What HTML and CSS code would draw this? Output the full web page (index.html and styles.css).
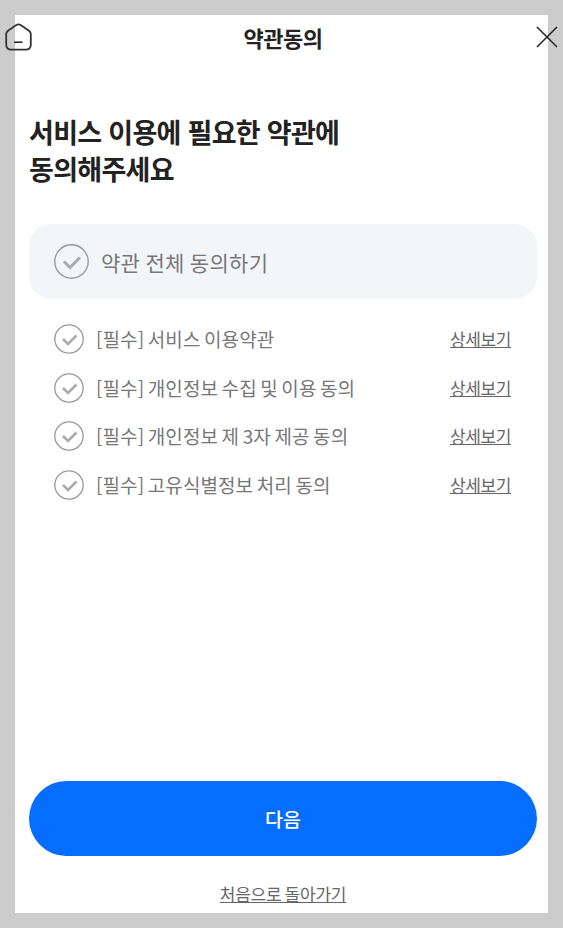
FILE: index.html
```html
<!DOCTYPE html>
<html lang="ko">
  <head>
    <meta charset="UTF-8">
    <title>약관동의</title>
    <link rel="stylesheet" href="styles.css">
  </head>
  <body>
    <div class="panel">
      <header class="top-bar">
        <svg class="home-icon" viewBox="0 0 27 28" width="27" height="28">
          <path d="M11 2.2 3 7.8C1.9 8.6 1.2 9.6 1.2 11V21.5C1.2 24.6 3.2 26.7 6.2 26.7H20.8C23.8 26.7 25.8 24.6 25.8 21.5V11C25.8 9.6 25.1 8.6 24 7.8L16 2.2C14.3 1.1 12.7 1.1 11 2.2Z" fill="none" stroke="#333" stroke-width="1.8"/>
          <path d="M9 19.2H17.5" fill="none" stroke="#333" stroke-width="1.7"/>
        </svg>
        <h1 class="top-title">약관동의</h1>
        <svg class="close-icon" viewBox="0 0 22 22" width="22" height="22">
          <path d="M1 1 21 21M21 1 1 21" fill="none" stroke="#222" stroke-width="1.5"/>
        </svg>
      </header>

      <h2 class="headline">서비스 이용에 필요한 약관에<br>동의해주세요</h2>

      <div class="agree-all">
        <svg class="check-big" viewBox="0 0 35 35" width="35" height="35">
          <circle cx="17.5" cy="17.5" r="16.7" fill="none" stroke="#999" stroke-width="1.4"/>
          <path d="M10 17.5 16 23.5 26 13.5" fill="none" stroke="#aaa" stroke-width="3"/>
        </svg>
        <span>약관 전체 동의하기</span>
      </div>

      <ul class="terms">
        <li class="term">
          <svg class="check" viewBox="0 0 30 30" width="30" height="30">
            <circle cx="15" cy="15" r="14.2" fill="none" stroke="#999" stroke-width="1.3"/>
            <path d="M9 15 14 20 22.5 11.5" fill="none" stroke="#aaa" stroke-width="2.6"/>
          </svg>
          <span class="term-name">[필수] 서비스 이용약관</span>
          <a class="detail" href="#">상세보기</a>
        </li>
        <li class="term">
          <svg class="check" viewBox="0 0 30 30" width="30" height="30">
            <circle cx="15" cy="15" r="14.2" fill="none" stroke="#999" stroke-width="1.3"/>
            <path d="M9 15 14 20 22.5 11.5" fill="none" stroke="#aaa" stroke-width="2.6"/>
          </svg>
          <span class="term-name">[필수] 개인정보 수집 및 이용 동의</span>
          <a class="detail" href="#">상세보기</a>
        </li>
        <li class="term">
          <svg class="check" viewBox="0 0 30 30" width="30" height="30">
            <circle cx="15" cy="15" r="14.2" fill="none" stroke="#999" stroke-width="1.3"/>
            <path d="M9 15 14 20 22.5 11.5" fill="none" stroke="#aaa" stroke-width="2.6"/>
          </svg>
          <span class="term-name">[필수] 개인정보 제 3자 제공 동의</span>
          <a class="detail" href="#">상세보기</a>
        </li>
        <li class="term">
          <svg class="check" viewBox="0 0 30 30" width="30" height="30">
            <circle cx="15" cy="15" r="14.2" fill="none" stroke="#999" stroke-width="1.3"/>
            <path d="M9 15 14 20 22.5 11.5" fill="none" stroke="#aaa" stroke-width="2.6"/>
          </svg>
          <span class="term-name">[필수] 고유식별정보 처리 동의</span>
          <a class="detail" href="#">상세보기</a>
        </li>
      </ul>

      <button class="next-btn">다음</button>
      <a class="back-link" href="#">처음으로 돌아가기</a>
    </div>
  </body>
</html>
```

FILE: styles.css
```css
* {
  box-sizing: border-box;
}

html, body {
  margin: 0;
  height: 928px;
  overflow: hidden;
}

body {
  background-color: #ccc;
  padding: 15px;
  font-family: "Noto Sans CJK KR", "Noto Sans", sans-serif;
}

.panel {
  background-color: #fff;
  width: 533px;
  height: 898px;
  padding: 0 11px 0 14px;
  display: flex;
  flex-direction: column;
}

.top-bar {
  height: 44px;
  margin: 0 -21px 0 -24px;
  display: flex;
  justify-content: space-between;
  align-items: center;
}

.home-icon, .close-icon {
  flex: none;
}

.top-title {
  margin: 0 2px 0 0;
  font-size: 22px;
  font-weight: 700;
  letter-spacing: -0.5px;
  color: #222;
}

.headline {
  margin: 54px 0 0;
  font-size: 27px;
  line-height: 37px;
  font-weight: 700;
  letter-spacing: -0.7px;
  color: #222;
}

.agree-all {
  margin-top: 37px;
  height: 75px;
  padding-left: 25px;
  display: flex;
  align-items: center;
  gap: 12px;
  background-color: #f3f6f9;
  border-radius: 22px;
  font-size: 21px;
  letter-spacing: 0.3px;
  word-spacing: -1px;
  color: #777;
}

.terms {
  list-style: none;
  margin: 15px 0 0;
  padding: 0 26px 0 25px;
}

.term {
  height: 48.7px;
  display: flex;
  align-items: center;
  gap: 13px;
  font-size: 19px;
  letter-spacing: 0.1px;
  word-spacing: -1.9px;
  color: #777;
}

.check {
  flex: none;
  margin-top: 1px;
}

.term-name {
  flex: 1;
  margin-left: -1px;
}

.detail {
  font-size: 17px;
  letter-spacing: -0.4px;
  color: #666;
}

.next-btn {
  margin-top: auto;
  height: 75px;
  border: none;
  border-radius: 38px;
  background-color: #056dff;
  color: #fff;
  font-family: inherit;
  font-size: 19.5px;
  font-weight: 500;
}

.back-link {
  margin: 25px 0 7px;
  align-self: center;
  font-size: 17px;
  line-height: 25px;
  letter-spacing: -0.2px;
  word-spacing: -1.5px;
  color: #666;
}
```
